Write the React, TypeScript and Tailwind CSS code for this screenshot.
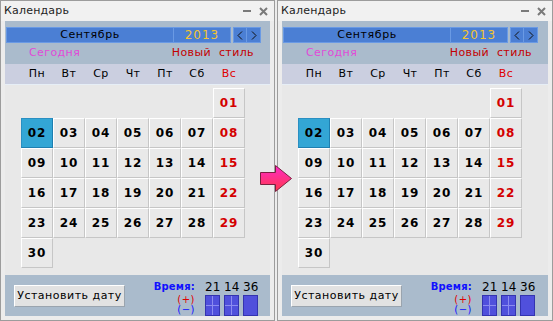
import React from "react";

const rows: (string | null)[][] = [
  [null, null, null, null, null, null, "01"],
  ["02", "03", "04", "05", "06", "07", "08"],
  ["09", "10", "11", "12", "13", "14", "15"],
  ["16", "17", "18", "19", "20", "21", "22"],
  ["23", "24", "25", "26", "27", "28", "29"],
  ["30", null, null, null, null, null, null],
];

const weekdays = ["Пн", "Вт", "Ср", "Чт", "Пт", "Сб", "Вс"];

function Block({ grid }: { grid: boolean }) {
  return (
    <div className="relative w-[15px] h-[21px] bg-[#5050dc] border border-[#3434b0]">
      {grid && (
        <>
          <div className="absolute left-[6px] top-0 bottom-0 w-[1px] bg-[#8c8cf0]" />
          <div className="absolute top-[9px] left-0 right-0 h-[1px] bg-[#8c8cf0]" />
        </>
      )}
    </div>
  );
}

function CalWindow({ width }: { width: number }) {
  return (
    <div
      className="flex flex-col h-[321px] border border-[#9c9c9c] bg-[#ececec] font-['DejaVu_Sans',sans-serif] text-[11px] text-black"
      style={{ width }}
    >
      {/* title bar */}
      <div className="h-[20px] flex items-center justify-between pl-[3px] pr-[6px] bg-[#f1f1f1] text-[#1e1e1e]">
        <span className="text-[11px] tracking-[0.2px]">Календарь</span>
        <div className="flex items-center gap-[8px]">
          <div className="w-[8px] h-[2px] bg-[#7a7a7a]" />
          <svg width="9" height="9" viewBox="0 0 9 9">
            <path d="M1 1 L8 8 M8 1 L1 8" stroke="#7a7a7a" strokeWidth="2" />
          </svg>
        </div>
      </div>
      {/* content */}
      <div className="mx-[4px] flex flex-col">
        {/* top bluish panel */}
        <div className="bg-[#aabbcc] pt-[6px] h-[43px] flex flex-col">
          <div className="flex items-stretch h-[16px] pl-[1px]">
            <div className="w-[168px] bg-[#4b7fd4] border border-[#6a9ae4] flex items-center justify-center text-[11px] tracking-[0.6px] text-black">
              Сентябрь
            </div>
            <div className="w-[57px] bg-[#4b7fd4] border border-l-0 border-[#6a9ae4] flex items-center justify-center text-[12px] tracking-[1px] text-[#f4c430]">
              2013
            </div>
            <div className="ml-[2px] flex">
              <div className="w-[14px] bg-[#4b7fd4] border border-[#6a9ae4] flex items-center justify-center">
                <svg width="6" height="9" viewBox="0 0 6 9">
                  <path d="M5 0.5 L1 4.5 L5 8.5" stroke="#111" strokeWidth="1" fill="none" />
                </svg>
              </div>
              <div className="w-[14px] bg-[#4b7fd4] border border-l-0 border-[#6a9ae4] flex items-center justify-center">
                <svg width="6" height="9" viewBox="0 0 6 9">
                  <path d="M1 0.5 L5 4.5 L1 8.5" stroke="#111" strokeWidth="1" fill="none" />
                </svg>
              </div>
            </div>
          </div>
          <div className="flex items-center justify-between h-[21px] pl-[24px] pr-[16px] text-[11px]">
            <span className="text-[#e04ad8] tracking-[0.4px]">Сегодня</span>
            <span className="text-[#c40000] tracking-[0.4px]">Новый&nbsp; стиль</span>
          </div>
        </div>
        {/* weekday row */}
        <div className="h-[21px] bg-[#cbcfe0] border-b border-[#e6eef6] pl-[16px] grid grid-cols-[repeat(7,32px)] items-center">
          {weekdays.map((d, i) => (
            <span
              key={d}
              className={`text-center text-[11px] tracking-[0.4px] ${i === 6 ? "text-[#e00000]" : "text-black"}`}
            >
              {d}
            </span>
          ))}
        </div>
        {/* calendar area */}
        <div className="h-[190px] bg-[#e8e8e8] pl-[16px] pt-[3px]">
          <div className="grid grid-cols-[repeat(7,32px)] grid-rows-[repeat(6,30px)]">
            {rows.flatMap((r, ri) =>
              r.map((d, ci) =>
                d === null ? (
                  <div key={`${ri}-${ci}`} />
                ) : d === "02" ? (
                  <div
                    key={d}
                    className="flex items-center justify-center bg-[#33a6d5] border border-[#2a8fc2] border-r-[#1f7fb0] border-b-[#1f7fb0] text-[12px] font-bold tracking-[0.8px] text-black"
                  >
                    {d}
                  </div>
                ) : (
                  <div
                    key={d}
                    className={`flex items-center justify-center bg-[#e9e9e9] border border-t-white border-l-white border-r-[#c6c6c6] border-b-[#c6c6c6] text-[12px] font-bold tracking-[0.8px] ${ci === 6 ? "text-[#d40000]" : "text-black"}`}
                  >
                    {d}
                  </div>
                )
              )
            )}
          </div>
        </div>
        {/* bottom panel */}
        <div className="h-[41px] bg-[#aabbcc] flex items-start">
          <button className="ml-[9px] mt-[10px] w-[111px] h-[22px] bg-[#e2e2e2] border border-t-white border-l-white border-r-[#9aa4ae] border-b-[#9aa4ae] flex items-center justify-center text-[11px] tracking-[0.5px] text-black">
            Установить дату
          </button>
          <div className="w-[70px] mt-[7px] flex flex-col items-end leading-none">
            <span className="text-[#1010ff] font-bold text-[10px] tracking-[0.2px] h-[12px]">Время:</span>
            <span className="text-[#e00000] text-[10px] mt-[1px] h-[10px] tracking-[0.5px]">(+)</span>
            <span className="text-[#1010ff] text-[10px] h-[10px] tracking-[0.5px]">(−)</span>
          </div>
          <div className="ml-[10px] mt-[6px] flex flex-col">
            <div className="flex gap-[4px] text-[12px] leading-none h-[14px]">
              <span className="w-[15px] text-center">21</span>
              <span className="w-[15px] text-center">14</span>
              <span className="w-[15px] text-center">36</span>
            </div>
            <div className="flex gap-[4px]">
              <Block grid />
              <Block grid />
              <Block grid={false} />
            </div>
          </div>
        </div>
      </div>
    </div>
  );
}

export default function App() {
  return (
    <div className="relative w-[553px] h-[321px] bg-[#ececec] flex gap-[2px] overflow-hidden">
      <CalWindow width={275} />
      <CalWindow width={276} />
      <svg
        className="absolute left-[260px] top-[165px]"
        width="33"
        height="27"
        viewBox="0 0 33 27"
      >
        <defs>
          <linearGradient id="arr" x1="0" y1="0" x2="0" y2="1">
            <stop offset="0" stopColor="#ff28c8" />
            <stop offset="1" stopColor="#ff3a4a" />
          </linearGradient>
        </defs>
        <path
          d="M0.5 7.5 L15.5 7.5 L15.5 0.5 L31.5 13.5 L15.5 26.5 L15.5 19.5 L0.5 19.5 Z"
          fill="url(#arr)"
          stroke="#7a2040"
          strokeWidth="1"
        />
      </svg>
    </div>
  );
}
